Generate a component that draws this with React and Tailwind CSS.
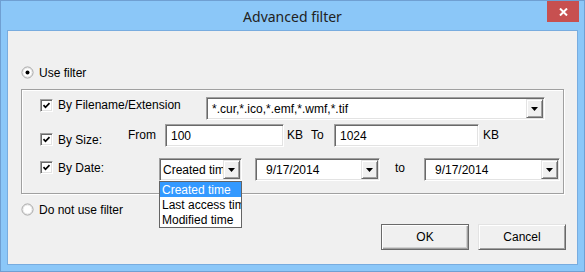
const sunken =
  "border border-t-[#a0a0a0] border-l-[#a0a0a0] border-b-white border-r-white shadow-[inset_1px_1px_0_#696969,inset_-1px_-1px_0_#e3e3e3]";

function Checkbox() {
  return (
    <div className={`flex h-[13px] w-[13px] shrink-0 items-center justify-center bg-white ${sunken}`}>
      <svg width="9" height="9" viewBox="0 0 9 9">
        <path d="M1.5 4.2 L3.5 6.3 L7.5 2.2" fill="none" stroke="#000" strokeWidth="1.7" />
      </svg>
    </div>
  );
}

function Radio({ checked }) {
  return (
    <svg width="13" height="13" viewBox="0 0 13 13" className="shrink-0">
      <circle cx="6.5" cy="6.5" r="5.5" fill="#fff" stroke="#9a9a9a" />
      <circle cx="6.5" cy="6.5" r="4.5" fill="none" stroke="#e6e6e6" />
      {checked && <circle cx="6.5" cy="6.5" r="2" fill="#000" />}
    </svg>
  );
}

function DropButton() {
  return (
    <div className="my-px mr-px flex w-[17px] shrink-0 items-center justify-center border border-t-[#e3e3e3] border-l-[#e3e3e3] border-b-[#696969] border-r-[#696969] bg-[#f0f0f0] shadow-[inset_1px_1px_0_#fff,inset_-1px_-1px_0_#a0a0a0]">
      <svg width="7" height="4" viewBox="0 0 7 4">
        <path d="M0 0 H7 L3.5 4 Z" fill="#000" />
      </svg>
    </div>
  );
}

function Combo({ value, className = "", textClass = "pl-[5px]" }) {
  return (
    <div className={`flex h-[23px] shrink-0 bg-white ${sunken} ${className}`}>
      <div className={`flex min-w-0 flex-1 items-center overflow-hidden whitespace-nowrap ${textClass}`}>{value}</div>
      <DropButton />
    </div>
  );
}

function Edit({ value, className = "" }) {
  return (
    <div className={`flex h-[23px] shrink-0 items-center bg-white pl-[5px] ${sunken} ${className}`}>{value}</div>
  );
}

function Button({ children, isDefault }) {
  return (
    <div
      className={`flex h-[26px] w-[88px] items-center justify-center bg-[#f0f0f0] ${
        isDefault
          ? "border border-[#6a6a6a] shadow-[inset_1px_1px_0_#fff,inset_-1px_-1px_0_#a0a0a0,inset_-2px_-2px_0_#d0d0d0]"
          : "border border-t-[#e3e3e3] border-l-[#e3e3e3] border-b-[#696969] border-r-[#696969] shadow-[inset_1px_1px_0_#fff,inset_-1px_-1px_0_#a0a0a0]"
      }`}
    >
      {children}
    </div>
  );
}

export default function App() {
  return (
    <div
      className="h-[272px] w-[585px] border border-[#6f9fd2] bg-[#8bc7f8] text-[12px] leading-[14px] text-black"
      style={{ fontFamily: '"Liberation Sans", Arial, sans-serif' }}
    >
      <div className="relative flex h-[29px] items-center justify-center">
        <span className="pt-[2px] text-[14px] text-[#222]" style={{ fontFamily: '"Noto Sans", sans-serif' }}>
          Advanced filter
        </span>
        <div className="absolute right-[5px] top-0 flex h-[21px] w-[32px] items-center justify-center bg-[#c75050]">
          <svg width="9" height="8" viewBox="0 0 9 8">
            <path d="M1 0.5 L8 7.5 M8 0.5 L1 7.5" stroke="#fff" strokeWidth="2" />
          </svg>
        </div>
      </div>

      <div className="ml-[6px] flex h-[235px] w-[571px] flex-col border border-[#78acdf] bg-[#f0f0f0]">
        <div className="ml-[13px] mt-[35px] flex h-[13px] items-center gap-[5px]">
          <Radio checked />
          <span>Use filter</span>
        </div>

        <div className="ml-[13px] mt-[10px] h-[105px] w-[543px] border border-[#a0a0a0] shadow-[inset_1px_1px_0_#fff,1px_1px_0_#fff]">
          <div className="mt-[7px] flex h-[23px] items-start pl-[18px]">
            <div className="mt-[2px] flex h-[13px] w-[166px] items-center gap-[5px]">
              <Checkbox />
              <span className="-mt-[1px]">By Filename/Extension</span>
            </div>
            <Combo value="*.cur,*.ico,*.emf,*.wmf,*.tif" className="w-[339px]" />
          </div>

          <div className="mt-[4px] flex h-[23px] items-start pl-[18px]">
            <div className="mt-[9px] flex h-[13px] w-[88px] items-center gap-[5px]">
              <Checkbox />
              <span>By Size:</span>
            </div>
            <span className="mt-[4px] w-[37px]">From</span>
            <Edit value="100" className="w-[119px]" />
            <span className="ml-[3px] mt-[4px] w-[24px]">KB</span>
            <span className="mt-[4px] w-[23px]">To</span>
            <Edit value="1024" className="w-[145px]" />
            <span className="ml-[4px] mt-[4px]">KB</span>
          </div>

          <div className="mt-[11px] flex h-[23px] items-start pl-[18px]">
            <div className="mt-[3px] flex h-[13px] w-[119px] items-center gap-[5px]">
              <Checkbox />
              <span>By Date:</span>
            </div>
            <div className="relative">
              <Combo value="Created time" className="w-[83px]" textClass="pl-[3px]" />
              <div className="absolute left-0 top-full z-10 w-[83px] border border-[#646464] bg-white">
                <div className="flex h-[15px] items-center bg-[#3399ff] pl-[2px] text-white">Created time</div>
                <div className="flex h-[15px] items-center overflow-hidden whitespace-nowrap pl-[2px]">Last access time</div>
                <div className="flex h-[15px] items-center pl-[2px]">Modified time</div>
              </div>
            </div>
            <Combo value="9/17/2014" className="ml-[13px] w-[125px]" textClass="pl-[10px]" />
            <span className="ml-[15px] mt-[3px] w-[29px]">to</span>
            <Combo value="9/17/2014" className="w-[136px]" textClass="pl-[10px]" />
          </div>
        </div>

        <div className="ml-[13px] mt-[9px] flex h-[13px] items-center gap-[5px]">
          <Radio />
          <span>Do not use filter</span>
        </div>

        <div className="mr-[11px] mt-[8px] flex justify-end gap-[9px]">
          <Button isDefault>OK</Button>
          <Button>Cancel</Button>
        </div>
      </div>
    </div>
  );
}
